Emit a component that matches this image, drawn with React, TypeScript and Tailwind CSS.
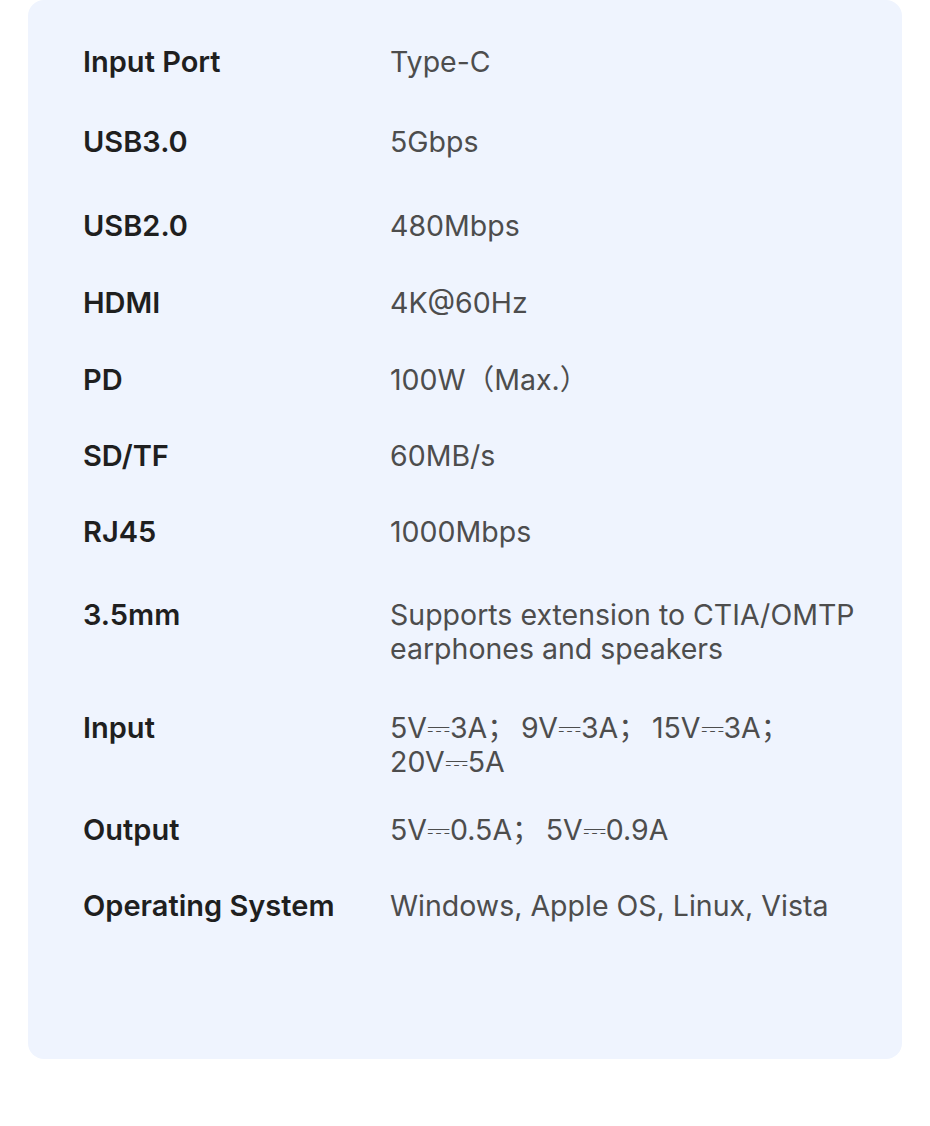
import React from 'react';

type Spec = { label: string; value: string[]; gap: string };

const specs: Spec[] = [
  { label: 'Input Port', value: ['Type-C'], gap: 'mt-0' },
  { label: 'USB3.0', value: ['5Gbps'], gap: 'mt-[46px]' },
  { label: 'USB2.0', value: ['480Mbps'], gap: 'mt-[50px]' },
  { label: 'HDMI', value: ['4K@60Hz'], gap: 'mt-[43px]' },
  { label: 'PD', value: ['100W（Max.）'], gap: 'mt-[43px]' },
  { label: 'SD/TF', value: ['60MB/s'], gap: 'mt-[42px]' },
  { label: 'RJ45', value: ['1000Mbps'], gap: 'mt-[42px]' },
  { label: '3.5mm', value: ['Supports extension to CTIA/OMTP', 'earphones and speakers'], gap: 'mt-[49px]' },
  { label: 'Input', value: ['5V⎓3A；\u20099V⎓3A；\u200915V⎓3A；', '20V⎓5A'], gap: 'mt-[45px]' },
  { label: 'Output', value: ['5V⎓0.5A；\u20095V⎓0.9A'], gap: 'mt-[34px]' },
  { label: 'Operating System', value: ['Windows, Apple OS, Linux, Vista'], gap: 'mt-[42px]' },
];

export default function App() {
  return (
    <div className="w-[930px] h-[1126px] bg-white" style={{ fontFamily: 'Inter, "Noto Sans CJK SC", sans-serif' }}>
      <div className="mx-[28px] h-[1059px] rounded-[16px] bg-[#eff4fe] pl-[55px] pt-[45px]">
        {specs.map((s) => (
          <div key={s.label} className={`flex ${s.gap}`}>
            <div className="w-[307px] shrink-0 text-[29px] leading-[34px] font-semibold text-[#1f1f1f]">
              {s.label}
            </div>
            <div className="text-[28.5px] leading-[34px] font-normal text-[#4d4d4d]">
              {s.value.map((v) => (
                <div key={v}>{v}</div>
              ))}
            </div>
          </div>
        ))}
      </div>
    </div>
  );
}
